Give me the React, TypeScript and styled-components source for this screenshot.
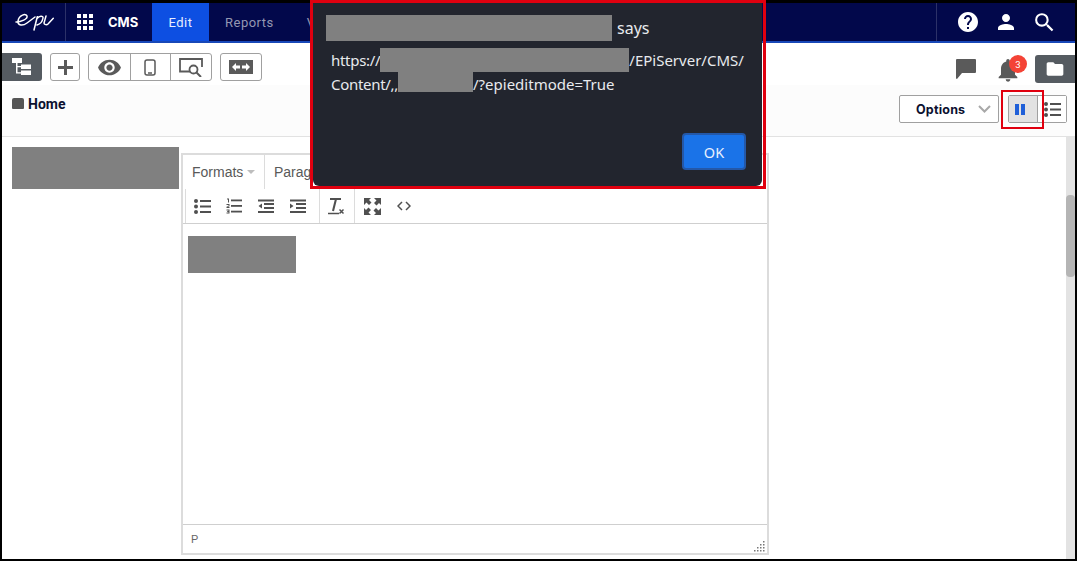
import React from "react";
import styled, { createGlobalStyle } from "styled-components";
import { MdHelp, MdPerson, MdSearch, MdNotifications, MdFolder, MdRemoveRedEye } from "react-icons/md";

const Global = createGlobalStyle`
  html, body { margin: 0; padding: 0; background: #000; }
  * { box-sizing: border-box; }
`;

const Frame = styled.div`
  position: relative;
  width: 1077px;
  height: 561px;
  background: #fff;
  border: solid #000;
  border-width: 3px 2px 2px 2px;
  display: flex;
  flex-direction: column;
  font-family: Roboto, "Liberation Sans", sans-serif;
`;

/* top navigation */
const TopBar = styled.header`
  height: 40px;
  flex: none;
  background: #02084b;
  border-bottom: 2px solid #1848b8;
  display: flex;
  align-items: stretch;
  color: #fff;
`;
const LogoCell = styled.div`
  width: 64px;
  border-right: 1px solid #2c3168;
  display: flex;
  align-items: center;
  padding-left: 13px;
`;
const AppGrid = styled.div`
  display: grid;
  grid-template-columns: repeat(3, 4px);
  grid-auto-rows: 4px;
  gap: 2px;
  margin: 0 15px 0 11px;
  align-self: center;
  & > i { background: #fff; display: block; }
`;
const Brand = styled.span`
  font-family: Inter, Roboto, sans-serif;
  font-weight: 700;
  font-size: 13px;
  width: 44px;
  align-self: center;
`;
const Tab = styled.div<{ $active?: boolean }>`
  width: ${(p) => (p.$active ? "57px" : "auto")};
  padding: ${(p) => (p.$active ? "0" : "0 0 0 16px")};
  background: ${(p) => (p.$active ? "#0d4fe2" : "transparent")};
  color: ${(p) => (p.$active ? "#e8eeff" : "#9497b2")};
  font-size: 13px;
  letter-spacing: 0.5px;
  display: flex;
  align-items: center;
  justify-content: ${(p) => (p.$active ? "center" : "flex-start")};
`;
const TabOverflow = styled(Tab)`
  padding-left: 33px;
`;
const NavRight = styled.div`
  margin-left: auto;
  width: 139px;
  border-left: 1px solid #2c3168;
  display: flex;
  align-items: center;
  padding-left: 19px;
  gap: 14px;
  & > svg { display: block; flex: none; }
`;

/* toolbar */
const ToolRow = styled.div`
  height: 42px;
  flex: none;
  display: flex;
  align-items: flex-start;
  padding-top: 10px;
  background: #fff;
`;
const DarkTab = styled.div`
  width: 40px;
  height: 28px;
  background: #555b61;
  border-radius: 0 3px 3px 0;
  display: flex;
  align-items: center;
  justify-content: center;
`;
const ToolBtn = styled.div<{ $w?: number }>`
  width: ${(p) => p.$w ?? 41}px;
  height: 28px;
  border: 1px solid #a0a0a0;
  border-radius: 3px;
  display: flex;
  align-items: center;
  justify-content: center;
  color: #5a5a5a;
  margin-left: 8px;
  flex: none;
`;
const BtnGroup = styled.div`
  display: flex;
  margin-left: 8px;
  height: 28px;
  border: 1px solid #a0a0a0;
  border-radius: 3px;
`;
const GroupCell = styled.div`
  width: 40.67px;
  display: flex;
  align-items: center;
  justify-content: center;
  color: #5a5a5a;
  & + & { border-left: 1px solid #a0a0a0; }
`;
const RightTools = styled.div`
  margin-left: auto;
  display: flex;
  align-items: flex-start;
  height: 32px;
`;
const IconSlot = styled.div<{ $w: number; $top: number }>`
  width: ${(p) => p.$w}px;
  position: relative;
  color: #5a5a5a;
  padding-top: ${(p) => p.$top}px;
`;
const BellIcon = styled(MdNotifications)`
  display: block;
  margin-left: -4px;
`;
const Badge = styled.span`
  position: absolute;
  left: 11px;
  top: 2px;
  width: 18px;
  height: 18px;
  border-radius: 50%;
  background: #f44336;
  color: #fff;
  font-size: 9.5px;
  display: flex;
  align-items: center;
  justify-content: center;
`;
const FolderTab = styled.div`
  width: 40px;
  height: 28px;
  margin-top: 2px;
  background: #555b61;
  border-radius: 3px 0 0 3px;
  display: flex;
  align-items: center;
  justify-content: center;
  color: #fff;
`;

/* breadcrumb row */
const CrumbRow = styled.div`
  height: 52px;
  flex: none;
  background: #fcfcfc;
  border-bottom: 1px solid #e2e2e2;
  display: flex;
  align-items: flex-start;
  padding-left: 10px;
`;
const Crumb = styled.div`
  display: flex;
  align-items: center;
  gap: 4px;
  font-size: 14px;
  font-weight: 700;
  color: #0c1030;
  height: 39px;
`;
const CrumbIcon = styled.span`
  width: 12px;
  height: 11px;
  background: #555;
  border-radius: 2px 2px 1px 1px;
  margin-top: -3px;
`;
const CrumbLabel = styled.span`
  margin-top: -1px;
`;
const OptionsBtn = styled.div`
  margin-left: auto;
  margin-top: 10px;
  width: 100px;
  height: 28px;
  border: 1px solid #a0a0a0;
  border-radius: 2px;
  background: #fff;
  display: flex;
  align-items: center;
  padding-left: 16px;
  font-family: Inter, Roboto, sans-serif;
  font-size: 12.5px;
  font-weight: 700;
  color: #0c1030;
  letter-spacing: 0.2px;
`;
const Chevron = styled.svg`
  margin-left: auto;
  margin-right: 7px;
`;
const ViewToggle = styled.div`
  margin: 10px 8px 0 9px;
  width: 59px;
  height: 28px;
  border: 1px solid #a0a0a0;
  border-radius: 2px;
  display: flex;
`;
const ViewCell = styled.div<{ $on?: boolean }>`
  flex: ${(p) => (p.$on ? "0 0 29px" : "1")};
  background: ${(p) => (p.$on ? "#e2e2e2" : "#fff")};
  border-right: ${(p) => (p.$on ? "1px solid #a0a0a0" : "none")};
  padding-right: ${(p) => (p.$on ? "6px" : "0")};
  display: flex;
  align-items: center;
  justify-content: center;
`;

/* main */
const Main = styled.main`
  flex: 1;
  min-height: 0;
  display: flex;
  align-items: flex-start;
  padding-left: 10px;
`;
const NameBlock = styled.div`
  width: 167px;
  height: 42px;
  margin-top: 10px;
  background: #808080;
  flex: none;
`;
const Editor = styled.section`
  width: 588px;
  height: 402px;
  margin: 16px 0 0 2px;
  border: 2px solid #dcdcdc;
  flex: none;
  display: flex;
  flex-direction: column;
  font-family: "Liberation Sans", Arial, sans-serif;
  background: #fff;
`;
const MenuRow = styled.div`
  height: 34px;
  flex: none;
  display: flex;
  font-size: 14px;
  color: #595959;
`;
const MenuItem = styled.div<{ $divider?: boolean }>`
  width: ${(p) => (p.$divider ? "82px" : "auto")};
  padding-left: 9px;
  border-right: ${(p) => (p.$divider ? "1px solid #dcdcdc" : "none")};
  display: flex;
  align-items: center;
`;
const Caret = styled.span`
  width: 0;
  height: 0;
  margin-left: 4px;
  border: 4px solid transparent;
  border-top-color: #bdbdbd;
  border-bottom: 0;
`;
const IconRow = styled.div`
  height: 35px;
  flex: none;
  border-bottom: 1px solid #cfcfcf;
  padding-left: 2px;
  display: flex;
`;
const IconGroup = styled.div<{ $w: number; $pad?: number }>`
  width: ${(p) => p.$w}px;
  border-left: 1px solid #dcdcdc;
  display: flex;
  align-items: center;
  flex: none;
  padding-left: ${(p) => p.$pad ?? 0}px;
`;
const EdBtn = styled.div`
  width: 32px;
  display: flex;
  justify-content: center;
  color: #505050;
`;
const EdBody = styled.div`
  flex: 1;
  padding: 12px 5px;
`;
const EdBlock = styled.div`
  width: 108px;
  height: 37px;
  background: #808080;
`;
const StatusBar = styled.div`
  height: 29px;
  flex: none;
  border-top: 1px solid #cfcfcf;
  display: flex;
  align-items: center;
  justify-content: space-between;
  padding: 0 2px 0 8px;
  font-size: 11px;
  color: #666;
`;
const Grip = styled.svg`
  align-self: flex-end;
  margin-bottom: 1px;
`;
const Track = styled.div`
  margin-left: auto;
  width: 9px;
  height: 100%;
  background: #e3e3e3;
  flex: none;
  padding-top: 58px;
`;
const Thumb = styled.div`
  height: 82px;
  background: #b5b5b5;
  border-radius: 4px;
`;

/* alert dialog */
const Dialog = styled.div`
  position: absolute;
  left: 311px;
  top: 0;
  width: 449px;
  height: 183px;
  background: #22252e;
  border-radius: 0 0 6px 6px;
  color: #e8eaed;
  font-family: "Noto Sans", "Open Sans", sans-serif;
  padding: 12px 16px 0 13px;
`;
const DialogTitle = styled.div`
  display: flex;
  align-items: center;
  font-size: 16px;
  height: 26px;
  gap: 5px;
`;
const Redact = styled.span<{ $w: number; $h: number }>`
  display: inline-block;
  width: ${(p) => p.$w}px;
  height: ${(p) => p.$h}px;
  background: #808080;
  vertical-align: top;
`;
const Tight = styled.span`
  letter-spacing: -0.3px;
`;
const DialogBody = styled.div`
  font-size: 15px;
  line-height: 24px;
  height: 48px;
  padding-left: 5px;
  margin-top: 7px;
  white-space: nowrap;
`;
const DialogFoot = styled.div`
  display: flex;
  justify-content: flex-end;
  margin-top: 37px;
`;
const OkBtn = styled.div`
  width: 64px;
  height: 37px;
  background: #1a73e8;
  border: 2px solid #2458a8;
  border-radius: 4px;
  color: #e8f0fe;
  font-size: 14.5px;
  display: flex;
  align-items: center;
  justify-content: center;
`;
const Highlight = styled.div`
  position: absolute;
  border: 2px solid #e0000f;
  pointer-events: none;
`;
const DialogHighlight = styled(Highlight)`
  left: 308px;
  top: -3px;
  width: 456px;
  height: 189px;
  border-width: 3px;
`;
const ToggleHighlight = styled(Highlight)`
  left: 999px;
  top: 87px;
  width: 43px;
  height: 39px;
  border-width: 2.5px;
`;

const Ic = styled.svg`
  display: block;
`;

const Logo = () => (
  <Ic width="40" height="18" viewBox="0 0 40 18" fill="none" stroke="#fff" strokeWidth="1.5" strokeLinecap="round">
    <path d="M1 9C6 9 13 6 12 3 11 0 4 2 3 8 2.500 13 8 13 12 10L20 4" />
    <path d="M22.300 3.700L19 17M22.300 5.300C24 3 28.500 2.500 28 5 27.500 8 26 11 22 12" />
    <path d="M31 3L29 10C29 12 32 12 33 11L38.300 5.300" />
  </Ic>
);

const Row3 = () => (
  <Ic width="17" height="15" viewBox="0 0 17 15" fill="#505050">
    <circle cx="2" cy="2" r="2" /><circle cx="2" cy="7.500" r="2" /><circle cx="2" cy="13" r="2" />
    <rect x="6" y="1" width="11" height="2" /><rect x="6" y="6.500" width="11" height="2" /><rect x="6" y="12" width="11" height="2" />
  </Ic>
);
const NumList = () => (
  <Ic width="16" height="16" viewBox="0 0 16 16" fill="#505050">
    <rect x="5" y="1.500" width="11" height="1.800" /><rect x="5" y="7" width="11" height="1.800" /><rect x="5" y="12.700" width="11" height="1.800" />
    <path d="M1 .5h2v4H2V1.500H1zM.5 6h3v2.200L1.800 9h1.700v1h-3V8.800l2-.8V7h-2zM.5 11.500h3v4h-3v-1h2V14H1.200v-1H2.500v-.5h-2z" />
  </Ic>
);
const Indent = ({ flip }: { flip?: boolean }) => (
  <Ic width="16" height="15" viewBox="0 0 16 15" fill="#505050">
    <rect x="0" y="0.500" width="16" height="2" /><rect x="6" y="4" width="10" height="2" /><rect x="6" y="8" width="10" height="2" /><rect x="0" y="12" width="16" height="2" />
    <path d={flip ? "M0 4.500v5l3.500-2.500z" : "M4 4.500v5L.5 7z"} />
  </Ic>
);
const ClearFormat = () => (
  <Ic width="18" height="17" viewBox="0 0 18 17" fill="none" stroke="#505050">
    <path d="M3 1h11" strokeWidth="2" />
    <path d="M9 1L6 13" strokeWidth="2" />
    <path d="M1 15.500h11" strokeWidth="1.500" />
    <path d="M12.500 11.500l4 4M16.500 11.500l-4 4" strokeWidth="1.500" />
  </Ic>
);
const Fullscreen = () => (
  <Ic width="17" height="17" viewBox="0 0 17 17" fill="#505050">
    <path d="M0 0h7L5 2l2.500 2.500-2.500 2.500L2.500 4.500 0 7zM17 0v7l-2-2-2.500 2.500-2.500-2.500L12.500 2.500 10 0zM0 17v-7l2 2 2.500-2.500 2.500 2.500L4.500 14.500 7 17zM17 17h-7l2-2-2.500-2.500 2.500-2.500 2.500 2.500L17 10z" />
  </Ic>
);
const Code = () => (
  <Ic width="14" height="10" viewBox="0 0 14 10" fill="none" stroke="#505050" strokeWidth="1.500">
    <path d="M5 1L1 5l4 4M9 1l4 4-4 4" />
  </Ic>
);

export default function App() {
  return (
    <Frame>
      <Global />
      <TopBar>
        <LogoCell><Logo /></LogoCell>
        <AppGrid>{Array.from({ length: 9 }, (_, i) => <i key={i} />)}</AppGrid>
        <Brand>CMS</Brand>
        <Tab $active>Edit</Tab>
        <Tab>Reports</Tab>
        <TabOverflow>V</TabOverflow>
        <NavRight>
          <MdHelp size={24} />
          <MdPerson size={24} />
          <MdSearch size={25} />
        </NavRight>
      </TopBar>

      <ToolRow>
        <DarkTab>
          <Ic width="20" height="18" viewBox="0 0 20 18" fill="#fff">
            <rect x="0" y="0" width="10" height="5" /><rect x="9" y="6.500" width="10" height="4.500" /><rect x="9" y="12.500" width="10" height="4.500" />
            <path d="M4 5h1.500v3H9v1.200H5.500v5H9v1.200H4z" />
          </Ic>
        </DarkTab>
        <ToolBtn $w={30}>
          <Ic width="15" height="15" viewBox="0 0 15 15" fill="#5a5a5a">
            <rect x="6" width="3" height="15" /><rect y="6" width="15" height="3" />
          </Ic>
        </ToolBtn>
        <BtnGroup>
          <GroupCell><MdRemoveRedEye size={25} /></GroupCell>
          <GroupCell>
            <Ic width="12" height="17" viewBox="0 0 12 17" fill="none" stroke="#5a5a5a" strokeWidth="1.500">
              <rect x="1" y="1" width="10" height="15" rx="2" /><path d="M4 14h4" />
            </Ic>
          </GroupCell>
          <GroupCell>
            <Ic width="25" height="19" viewBox="0 0 25 19" fill="none" stroke="#5a5a5a" strokeWidth="1.800">
              <path d="M11 13.500H1V1h22v8" /><circle cx="14.500" cy="11.500" r="4" /><path d="M17.500 14.500L22 19" strokeWidth="2" />
            </Ic>
          </GroupCell>
        </BtnGroup>
        <ToolBtn $w={42}>
          <Ic width="24" height="14" viewBox="0 0 24 14">
            <rect width="24" height="14" fill="#5a5a5a" />
            <path d="M3 7l4-4v2.500h4v3H7V11zM21 7l-4-4v2.500h-4v3h4V11z" fill="#fff" />
          </Ic>
        </ToolBtn>
        <RightTools>
          <IconSlot $w={42} $top={6}>
            <Ic width="20" height="20" viewBox="0 0 20 20" fill="#5a5a5a">
              <path d="M1 0h18a1 1 0 0 1 1 1v12a1 1 0 0 1-1 1H6l-5 6a1 1 0 0 1-1-1V1a1 1 0 0 1 1-1z" />
            </Ic>
          </IconSlot>
          <IconSlot $w={37} $top={3}>
            <BellIcon size={28} />
            <Badge>3</Badge>
          </IconSlot>
          <FolderTab><MdFolder size={20} /></FolderTab>
        </RightTools>
      </ToolRow>

      <CrumbRow>
        <Crumb><CrumbIcon /><CrumbLabel>Home</CrumbLabel></Crumb>
        <OptionsBtn>
          Options
          <Chevron width="13" height="8" viewBox="0 0 13 8" fill="none" stroke="#a8a8a8" strokeWidth="2"><path d="M1 1l5.500 5.500L12 1" /></Chevron>
        </OptionsBtn>
        <ViewToggle>
          <ViewCell $on>
            <Ic width="10" height="11" viewBox="0 0 10 11" fill="#1f5fd8"><rect width="4" height="11" /><rect x="6" width="4" height="11" /></Ic>
          </ViewCell>
          <ViewCell><Row3 /></ViewCell>
        </ViewToggle>
      </CrumbRow>

      <Main>
        <NameBlock />
        <Editor>
          <MenuRow>
            <MenuItem $divider>Formats<Caret /></MenuItem>
            <MenuItem>Paragraph</MenuItem>
          </MenuRow>
          <IconRow>
            <IconGroup $w={134}>
              <EdBtn><Row3 /></EdBtn>
              <EdBtn><NumList /></EdBtn>
              <EdBtn><Indent /></EdBtn>
              <EdBtn><Indent flip /></EdBtn>
            </IconGroup>
            <IconGroup $w={35}><EdBtn><ClearFormat /></EdBtn></IconGroup>
            <IconGroup $w={100} $pad={1}>
              <EdBtn><Fullscreen /></EdBtn>
              <EdBtn><Code /></EdBtn>
            </IconGroup>
          </IconRow>
          <EdBody><EdBlock /></EdBody>
          <StatusBar>
            <span>P</span>
            <Grip width="11" height="11" viewBox="0 0 11 11" fill="#777">
              {[[9,1],[6,4],[9,4],[3,7],[6,7],[9,7],[0,10],[3,10],[6,10],[9,10]].map(([x, y]) => (
                <rect key={`${x}-${y}`} x={x} y={y - 1} width="1.500" height="1.500" />
              ))}
            </Grip>
          </StatusBar>
        </Editor>
        <Track><Thumb /></Track>
      </Main>

      <DialogHighlight />
      <ToggleHighlight />
      <Dialog>
        <DialogTitle><Redact $w={286} $h={26} />says</DialogTitle>
        <DialogBody>
          <Tight>https://</Tight><Redact $w={249} $h={24} />/EPiServer/CMS/<br />
          <Tight>Content/,,</Tight><Redact $w={75} $h={20} />/?epieditmode=True
        </DialogBody>
        <DialogFoot><OkBtn>OK</OkBtn></DialogFoot>
      </Dialog>
    </Frame>
  );
}
